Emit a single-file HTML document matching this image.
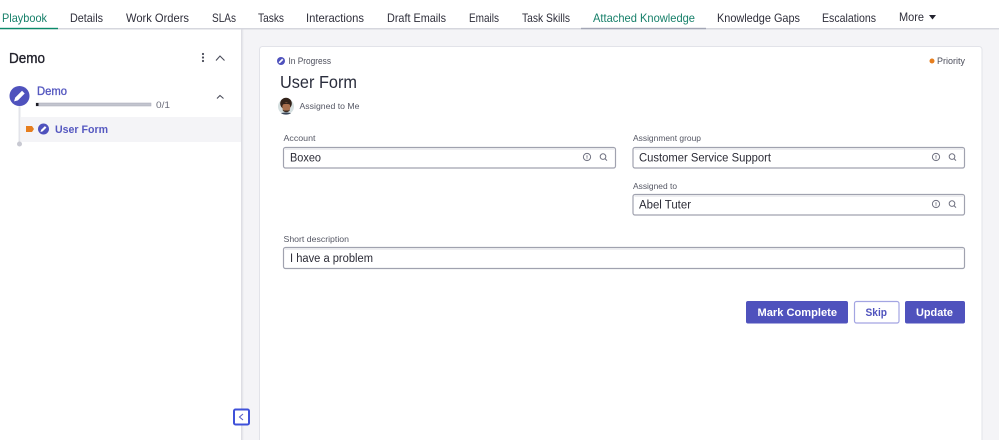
<!DOCTYPE html>
<html><head><meta charset="utf-8"><title>User Form</title>
<style>
html,body{margin:0;padding:0;width:999px;height:440px;overflow:hidden;background:#fff}
svg{display:block;filter:blur(.3px)}
text{font-family:"Liberation Sans",sans-serif;fill:#2e2e3a}
.tab{font-size:12px}
.lbl{font-size:8.5px;fill:#555764}
.val{font-size:11.5px;fill:#2b2b36}
.btn{font-size:11px;font-weight:bold;fill:#fff}
.semi{stroke-width:.35px}
</style></head><body>
<svg width="999" height="440" viewBox="0 0 999 440" xmlns="http://www.w3.org/2000/svg">
<defs>
<linearGradient id="sh" x1="0" x2="1" y1="0" y2="0"><stop offset="0" stop-color="#d9dae0"/><stop offset="1" stop-color="#f4f4f7"/></linearGradient>
<g id="pen"><path d="M-3 3 L-2.400 .9 L1.400 -2.900 L2.900 -1.400 L-.9 2.400 Z" fill="#fff"/></g>
<g id="icons" fill="none" stroke="#6f7180" stroke-width="1"><circle cx="0" cy="0" r="3.600"/><path d="M0 -1.800V.8M0 1.400V2.200" stroke-width=".9"/><circle cx="16" cy="-.4" r="2.800"/><path d="M18 1.600L20 3.600"/></g>
</defs>
<rect width="999" height="440" fill="#fff"/>
<!-- right panel -->
<rect x="241" y="29" width="758" height="411" fill="#f4f4f7"/>
<rect x="241" y="29" width="3" height="411" fill="url(#sh)"/>
<!-- header line -->
<rect x="0" y="28" width="999" height="1.500" fill="#d6d7de"/>
<rect x="0" y="27.800" width="58" height="1.400" fill="#0b8a6a"/>
<rect x="581" y="27.800" width="125" height="1.400" fill="#a3a6b5"/>
<!-- tabs -->
<text class="tab" x="2" y="22" textLength="45" lengthAdjust="spacingAndGlyphs" style="fill:#17806a">Playbook</text>
<text class="tab" x="70" y="22" textLength="33" lengthAdjust="spacingAndGlyphs">Details</text>
<text class="tab" x="126" y="22" textLength="63" lengthAdjust="spacingAndGlyphs">Work Orders</text>
<text class="tab" x="212" y="22" textLength="24" lengthAdjust="spacingAndGlyphs">SLAs</text>
<text class="tab" x="258" y="22" textLength="26" lengthAdjust="spacingAndGlyphs">Tasks</text>
<text class="tab" x="306" y="22" textLength="58" lengthAdjust="spacingAndGlyphs">Interactions</text>
<text class="tab" x="387" y="22" textLength="59" lengthAdjust="spacingAndGlyphs">Draft Emails</text>
<text class="tab" x="469" y="22" textLength="30" lengthAdjust="spacingAndGlyphs">Emails</text>
<text class="tab" x="522" y="22" textLength="48" lengthAdjust="spacingAndGlyphs">Task Skills</text>
<text class="tab" x="593" y="22" textLength="102" lengthAdjust="spacingAndGlyphs" style="fill:#17806a">Attached Knowledge</text>
<text class="tab" x="717" y="22" textLength="83" lengthAdjust="spacingAndGlyphs">Knowledge Gaps</text>
<text class="tab" x="822" y="22" textLength="54" lengthAdjust="spacingAndGlyphs">Escalations</text>
<text class="tab" x="899" y="21" textLength="25" lengthAdjust="spacingAndGlyphs">More</text>
<path d="M929 15H936L932.500 19.500Z" fill="#23232e"/>
<!-- sidebar -->
<text class="semi" x="9" y="63" font-size="14.500" textLength="36" lengthAdjust="spacingAndGlyphs" style="fill:#22222c;stroke:#22222c">Demo</text>
<g fill="#4a4c5a"><circle cx="203" cy="54" r="1.100"/><circle cx="203" cy="57.500" r="1.100"/><circle cx="203" cy="61" r="1.100"/></g>
<path d="M216 60.500L220 56L224.500 60.500" fill="none" stroke="#4a4c5a" stroke-width="1.100"/>
<rect x="18.500" y="106" width="2" height="38" fill="#e3e4ea"/>
<circle cx="19.500" cy="96" r="10" fill="#4f52bd"/>
<use href="#pen" transform="translate(19.500 96) scale(1.800)"/>
<text class="semi" x="37" y="95" font-size="11.500" textLength="30" lengthAdjust="spacingAndGlyphs" style="fill:#5558c0;stroke:#5558c0">Demo</text>
<rect x="36" y="103" width="115" height="3" fill="#c3c5cf" stroke="#a4a6b3" stroke-width=".5"/>
<rect x="36" y="103" width="2.500" height="3" fill="#1c1c24"/>
<text x="156" y="108" font-size="9" textLength="14" lengthAdjust="spacingAndGlyphs" style="fill:#6b6d7b">0/1</text>
<path d="M217 98.500L220 95.500L223.500 98.500" fill="none" stroke="#4a4c5a" stroke-width="1.100"/>
<rect x="21" y="117" width="220" height="25" fill="#f4f4f7"/>
<path d="M26 126H32L34 129L32 132H26Z" fill="#e67e1e"/>
<circle cx="43.500" cy="129" r="5.500" fill="#4f52bd"/>
<use href="#pen" transform="translate(43.500 129)"/>
<text x="55" y="133" font-size="11" font-weight="bold" textLength="53" lengthAdjust="spacingAndGlyphs" style="fill:#5558c0">User Form</text>
<circle cx="19.500" cy="144" r="2.500" fill="#c8c9d2"/>
<!-- card -->
<rect x="259.500" y="46.500" width="722.500" height="410" rx="3" fill="#fff" stroke="#e2e3e9"/>
<circle cx="281" cy="61" r="4" fill="#4f52bd"/>
<use href="#pen" transform="translate(281 61) scale(.8)"/>
<text x="288.500" y="64" font-size="9" textLength="42.500" lengthAdjust="spacingAndGlyphs" style="fill:#4b4d5a">In Progress</text>
<circle cx="932" cy="61" r="2.500" fill="#e67e1e"/>
<text x="937" y="64" font-size="9" textLength="28" lengthAdjust="spacingAndGlyphs" style="fill:#4b4d5a">Priority</text>
<text x="280" y="88" font-size="17.500" textLength="77" lengthAdjust="spacingAndGlyphs" style="fill:#2a2d3c">User Form</text>
<!-- avatar -->
<circle cx="286" cy="106.500" r="8" fill="#d5dfe0"/>
<circle cx="286" cy="103.500" r="5.800" fill="#33231a"/>
<ellipse cx="286.300" cy="107" rx="4" ry="5" fill="#a9714f"/>
<path d="M282.300 105C283.500 103.500 289 103.500 290.300 105L290.500 102.500H282Z" fill="#33231a"/>
<path d="M282.500 109.500C283 113 289.500 113 290 109.500L288.500 110.500H284Z" fill="#3a2a20"/>
<path d="M281 113.300C283 112.300 289 112.300 291 113.300C288.500 115 283.500 115 281 113.300Z" fill="#3a4658"/>
<text x="299.500" y="109" font-size="8.500" textLength="60" lengthAdjust="spacingAndGlyphs" style="fill:#555764">Assigned to Me</text>
<!-- fields -->
<text class="lbl" x="283.500" y="141" textLength="32" lengthAdjust="spacingAndGlyphs">Account</text>
<rect x="283.500" y="147.500" width="332" height="20.500" rx="2" fill="#fff" stroke="#a0a2af" stroke-width="1.200"/>
<rect x="285" y="148.500" width="329" height="1.500" fill="#eeeef1"/>
<text class="val" x="290" y="161.500" textLength="31" lengthAdjust="spacingAndGlyphs">Boxeo</text>
<use href="#icons" x="587" y="157"/>

<text class="lbl" x="633" y="141" textLength="68" lengthAdjust="spacingAndGlyphs">Assignment group</text>
<rect x="633" y="147.500" width="331.500" height="20.500" rx="2" fill="#fff" stroke="#a0a2af" stroke-width="1.200"/>
<rect x="634.500" y="148.500" width="328.500" height="1.500" fill="#eeeef1"/>
<text class="val" x="639" y="161.500" textLength="132" lengthAdjust="spacingAndGlyphs">Customer Service Support</text>
<use href="#icons" x="936" y="157"/>

<text class="lbl" x="633" y="189" textLength="44" lengthAdjust="spacingAndGlyphs">Assigned to</text>
<rect x="633" y="194.500" width="331.500" height="20.500" rx="2" fill="#fff" stroke="#a0a2af" stroke-width="1.200"/>
<rect x="634.500" y="195.500" width="328.500" height="1.500" fill="#eeeef1"/>
<text class="val" x="639" y="208.500" textLength="52" lengthAdjust="spacingAndGlyphs">Abel Tuter</text>
<use href="#icons" x="936" y="204"/>

<text class="lbl" x="283.500" y="242" textLength="65.500" lengthAdjust="spacingAndGlyphs">Short description</text>
<rect x="283.500" y="247.500" width="681" height="21" rx="2" fill="#fff" stroke="#a0a2af" stroke-width="1.200"/>
<rect x="285" y="248.500" width="678" height="1.500" fill="#eeeef1"/>
<text class="val" x="290" y="262" textLength="83" lengthAdjust="spacingAndGlyphs">I have a problem</text>
<!-- buttons -->
<rect x="746" y="301" width="102" height="22.500" rx="2" fill="#4f52bd"/>
<text class="btn" x="757.500" y="316" textLength="79.500" lengthAdjust="spacingAndGlyphs">Mark Complete</text>
<rect x="854.500" y="301.500" width="44.500" height="21.500" rx="2" fill="#fff" stroke="#a3a5e2" stroke-width="1.200"/>
<text class="btn" x="865.500" y="316" textLength="21.500" lengthAdjust="spacingAndGlyphs" style="fill:#4f52bd">Skip</text>
<rect x="905" y="301" width="60" height="22.500" rx="2" fill="#4f52bd"/>
<text class="btn" x="916" y="316" textLength="37" lengthAdjust="spacingAndGlyphs">Update</text>
<!-- collapse -->
<rect x="234" y="409.500" width="15" height="15" rx="1.500" fill="#fff" stroke="#3f51d9" stroke-width="2"/>
<path d="M243 414L239.500 417L243 420" fill="none" stroke="#5a5fc8" stroke-width="1.100"/>
</svg>
</body></html>
